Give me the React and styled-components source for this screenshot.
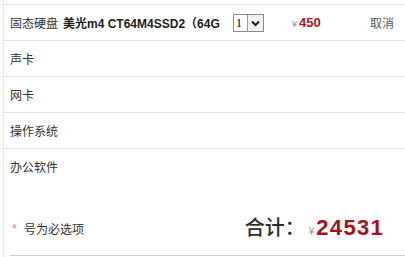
import React from "react";
import styled, { createGlobalStyle } from "styled-components";

const Global = createGlobalStyle`
  html, body { margin: 0; padding: 0; background: #fff; }
  body { font-family: "Liberation Sans", "Noto Sans CJK SC", sans-serif; color: #333; }
`;

const Panel = styled.div`
  margin-left: 3px;
  padding-top: 4px;
  border-left: 1px solid #e6e6e6;
  width: 402px;
  height: 253px;
`;

const Row = styled.div`
  display: flex;
  align-items: center;
  height: 35px;
  border-top: 1px solid #e4e4e4;
  padding-left: 6px;
  font-size: 12px;
  font-family: "Noto Sans CJK SC", sans-serif;
  color: #333;
`;

const NameCell = styled.div`
  width: 223px;
  white-space: nowrap;
  overflow: hidden;
`;

const Model = styled.b`
  font-family: "Liberation Sans", "Noto Sans CJK SC", sans-serif;
  font-weight: bold;
  margin-left: 5px;
  color: #222;
`;

const SelectCell = styled.div`
  width: 59px;
`;

const Select = styled.div`
  display: inline-flex;
  align-items: stretch;
  height: 16px;
  border: 1px solid #8a8a8a;
  background: #fff;
`;

const SelectValue = styled.span`
  width: 11px;
  padding-left: 2px;
  font-family: "Liberation Serif", serif;
  font-size: 12px;
  line-height: 16px;
  color: #000;
`;

const SelectBtn = styled.span`
  width: 15px;
  border-left: 1px solid #9a9a9a;
  background: #f2f2f2;
  display: flex;
  align-items: center;
  justify-content: center;
`;

const PriceCell = styled.div`
  width: 78px;
  display: flex;
  align-items: baseline;
`;

const Yen = styled.span`
  font-family: "Liberation Sans", sans-serif;
  font-size: ${p => p.$size || 9}px;
  color: #999;
  margin-right: 2px;
`;

const Price = styled.span`
  font-family: "Liberation Sans", sans-serif;
  font-weight: bold;
  font-size: 13px;
  color: #b2121f;
`;

const Cancel = styled.span`
  font-size: 12px;
  color: #4f5b66;
`;

const Footer = styled.div`
  margin-left: 6px;
  height: 72px;
  border-bottom: 1px solid #cfcfcf;
  display: flex;
  align-items: flex-end;
  justify-content: space-between;
  padding: 0 22px 14px 2px;
  box-sizing: border-box;
`;

const Required = styled.div`
  display: flex;
  align-items: center;
  font-family: "Noto Sans CJK SC", sans-serif;
  font-size: 12px;
  color: #333;
  padding-bottom: 4px;
`;

const Star = styled.span`
  color: #e08080;
  font-family: "Liberation Sans", sans-serif;
  font-size: 12px;
  width: 12px;
`;

const Total = styled.div`
  display: flex;
  align-items: baseline;
`;

const TotalLabel = styled.span`
  font-family: "Noto Sans CJK SC", serif;
  font-size: 20px;
  font-weight: 500;
  color: #2e2e2e;
  margin-right: 4px;
`;

const TotalNum = styled.span`
  font-family: "Liberation Sans", sans-serif;
  font-weight: bold;
  font-size: 22px;
  letter-spacing: 1.3px;
  color: #a8101c;
`;

const Chevron = () => (
  <svg width="9" height="7" viewBox="0 0 9 7">
    <path d="M1 1.5 L4.5 5 L8 1.5" fill="none" stroke="#222" strokeWidth="2" />
  </svg>
);

const rows = ["声卡", "网卡", "操作系统", "办公软件"];

export default function App() {
  return (
    <>
      <Global />
      <Panel>
        <Row>
          <NameCell>
            固态硬盘<Model>美光m4 CT64M4SSD2（64G</Model>
          </NameCell>
          <SelectCell>
            <Select>
              <SelectValue>1</SelectValue>
              <SelectBtn><Chevron /></SelectBtn>
            </Select>
          </SelectCell>
          <PriceCell>
            <Yen>¥</Yen>
            <Price>450</Price>
          </PriceCell>
          <Cancel>取消</Cancel>
        </Row>
        {rows.map(r => (
          <Row key={r}>{r}</Row>
        ))}
        <Footer>
          <Required>
            <Star>*</Star>号为必选项
          </Required>
          <Total>
            <TotalLabel>合计：</TotalLabel>
            <Yen $size={10}>¥</Yen>
            <TotalNum>24531</TotalNum>
          </Total>
        </Footer>
      </Panel>
    </>
  );
}
